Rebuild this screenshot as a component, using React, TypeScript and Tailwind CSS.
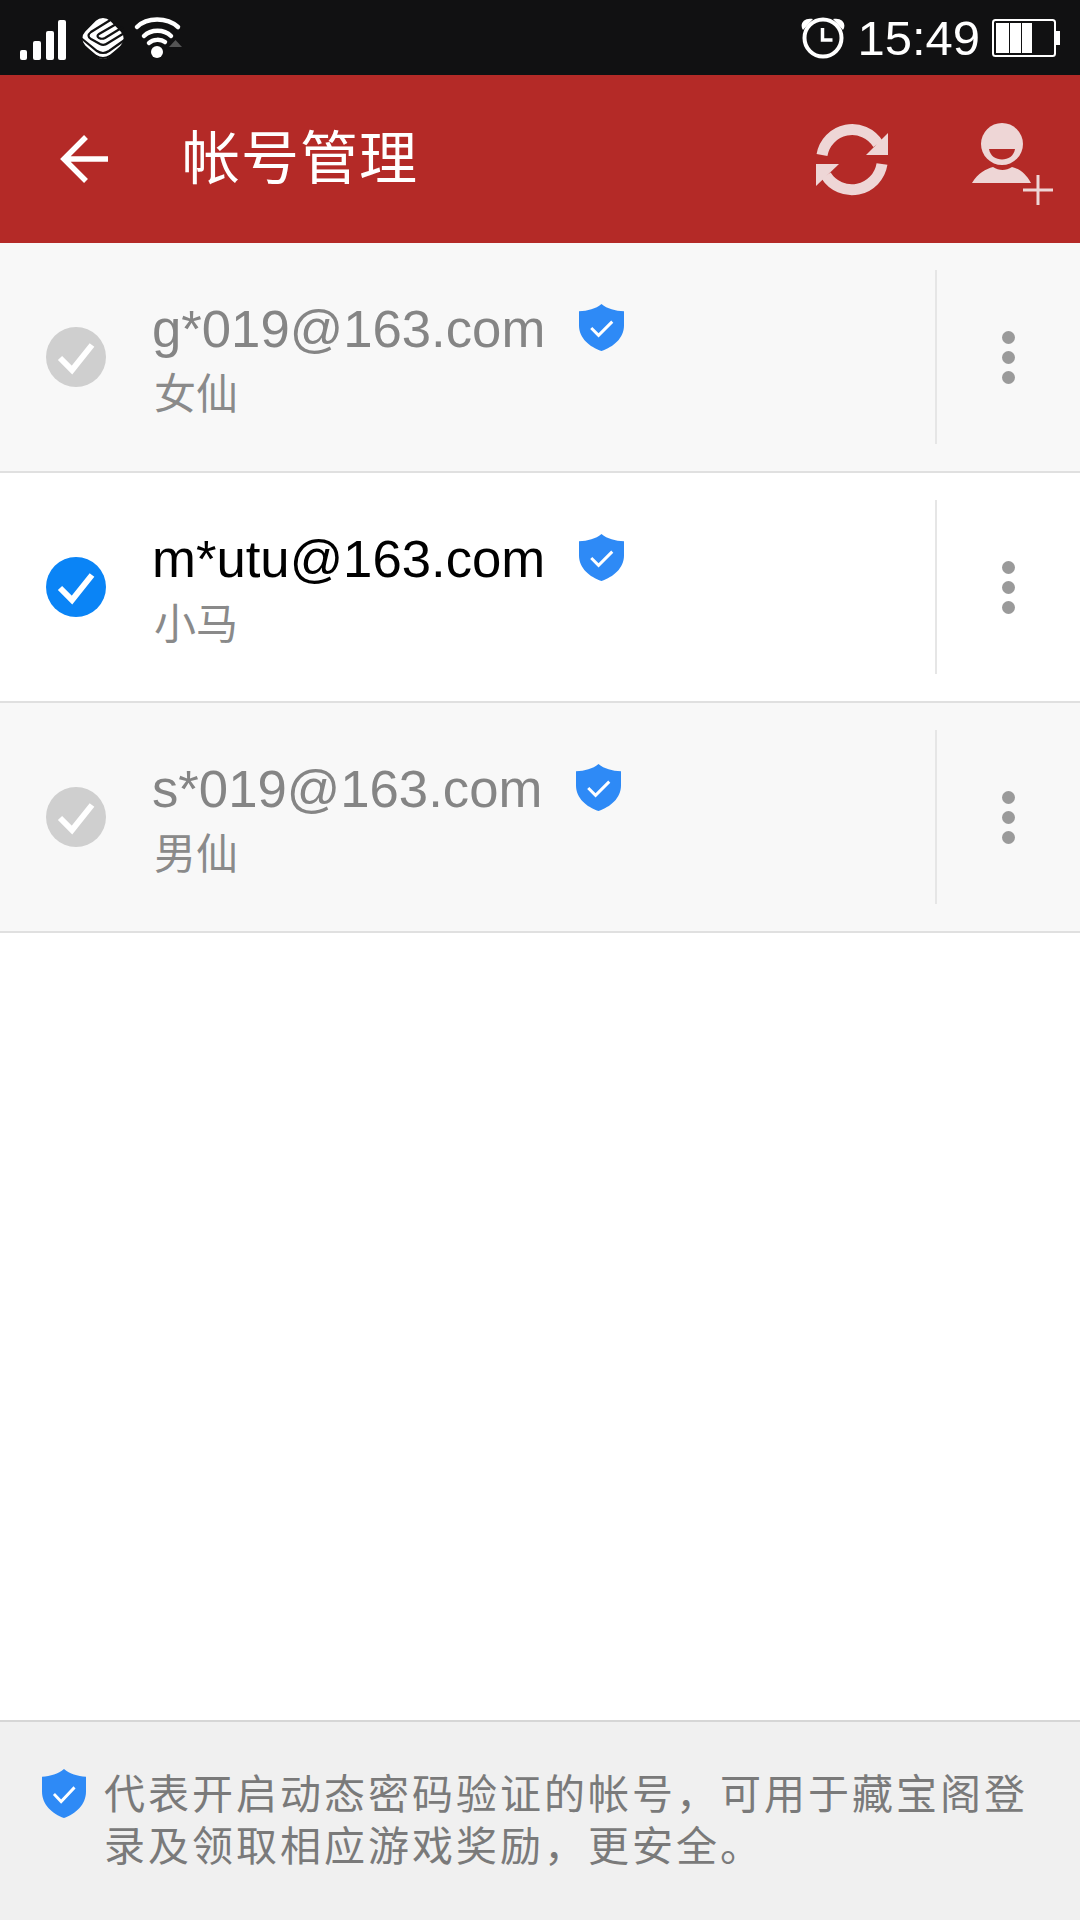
const cjk = "font-['Noto_Sans_CJK_SC','Noto_Sans',sans-serif]";

function Shield({ className }: { className: string }) {
  return (
    <svg viewBox="0 0 46 48" preserveAspectRatio="none" className={className}>
      <path d="M23 0C29 5 37 7 46 7.5V22C46 35 35 44 23 48C11 44 0 35 0 22V7.5C9 7 17 5 23 0Z" fill="#2e8af6" />
      <path d="M12.5 24.5L20 32L34 18" fill="none" stroke="#fff" strokeWidth="3" />
    </svg>
  );
}

function Row({ email, name, active, bg }: { email: string; name: string; active?: boolean; bg: string }) {
  return (
    <div className={`flex h-[230px] items-center border-b-2 border-[#e0e0e0] ${bg}`}>
      <div className="flex w-[152px] shrink-0 justify-start pl-[46px]">
        <svg viewBox="0 0 60 60" className="h-[60px] w-[60px]">
          <circle cx="30" cy="30" r="30" fill={active ? "#0a84f6" : "#cfcfcf"} />
          <path d="M14 31L26 43L46 18" fill="none" stroke="#fff" strokeWidth="6" />
        </svg>
      </div>
      <div className="flex w-[783px] shrink-0 flex-col">
        <div className="flex items-center">
          <span className={`font-['Liberation_Sans',sans-serif] text-[52.7px] leading-[62px] ${active ? "text-black" : "text-[#858585]"}`}>{email}</span>
          <Shield className="mb-[3px] ml-[34px] h-[47px] w-[45px]" />
        </div>
        <span className={`${cjk} mt-[6px] pl-[2px] text-[42px] leading-[50px] text-[#8a8a8a]`}>{name}</span>
      </div>
      <div className="h-[174px] w-[2px] shrink-0 bg-[#e6e6e6]" />
      <div className="flex flex-1 flex-col items-center gap-[7px]">
        <div className="h-[13px] w-[13px] rounded-full bg-[#9a9a9a]" />
        <div className="h-[13px] w-[13px] rounded-full bg-[#9a9a9a]" />
        <div className="h-[13px] w-[13px] rounded-full bg-[#9a9a9a]" />
      </div>
    </div>
  );
}

export default function App() {
  return (
    <div className="flex h-[1920px] w-[1080px] flex-col overflow-hidden bg-white">
      <div className="flex h-[75px] shrink-0 items-center bg-[#111112] text-white">
        <svg viewBox="18 12 170 52" className="ml-[18px] h-[52px] w-[170px]">
          <rect x="20" y="50" width="7" height="10" rx="2" fill="#fff" />
          <rect x="33" y="41" width="8" height="19" rx="2" fill="#fff" />
          <rect x="46" y="31" width="8" height="29" rx="2" fill="#fff" />
          <rect x="58" y="20" width="8" height="40" rx="2" fill="#fff" />
          <rect x="85.500" y="21" width="35" height="35" rx="10" transform="rotate(45 103 38.500)" fill="#fff" />
          <g fill="none" stroke="#111112" strokeWidth="2.200">
            <path d="M112 19L91 32Q86 36 91 39L100 44Q104 46 108 43L126 32" />
            <path d="M118 23L99 34Q96 36 99 38Q102 39.500 105 38L123 27" />
            <path d="M81 38L97 51Q103 55 109 51L126 39" />
            <path d="M85 47L96 56Q103 60 110 56L120 48" />
          </g>
          <path d="M137 27C147 17 167 17 178 27" fill="none" stroke="#fff" strokeWidth="4.500" strokeLinecap="round" />
          <path d="M144 36C151 29 164 29 171 36" fill="none" stroke="#fff" strokeWidth="4.500" strokeLinecap="round" />
          <path d="M149 43C153 39 161 39 165 42" fill="none" stroke="#fff" strokeWidth="4.500" strokeLinecap="round" />
          <circle cx="157" cy="52" r="6" fill="#fff" />
          <path d="M169 47L175.500 40L182 47Z" fill="#555" />
        </svg>
        <div className="flex-1" />
        <svg viewBox="801 16 44 44" className="h-[44px] w-[44px]">
          <circle cx="823" cy="38" r="18.500" fill="none" stroke="#fff" strokeWidth="4" />
          <path d="M822.500 28V40H832.500" fill="none" stroke="#fff" strokeWidth="3.500" />
          <path d="M803 30C799 24 804 17 813 19ZM843 30C847 24 842 17 833 19Z" fill="#fff" />
        </svg>
        <span className="ml-[12px] font-['Liberation_Sans',sans-serif] text-[49px] leading-[50px]">15:49</span>
        <svg viewBox="0 0 68 38" className="ml-[12px] mr-[20px] h-[38px] w-[68px]">
          <rect x="1" y="1" width="62" height="36" rx="2.500" fill="none" stroke="#fff" strokeWidth="2" />
          <rect x="4" y="4" width="13" height="30" fill="#fff" />
          <rect x="18" y="4" width="11" height="30" fill="#fff" />
          <rect x="30" y="4" width="10" height="30" fill="#fff" />
          <rect x="64" y="12" width="4" height="14" fill="#fff" />
        </svg>
      </div>

      <div className="flex h-[168px] shrink-0 items-center bg-[#b42a27]">
        <svg viewBox="0 0 50 50" className="ml-[60px] h-[50px] w-[50px]">
          <path d="M48 25H5M26 3L4 25L26 47" fill="none" stroke="#fff" strokeWidth="5.500" />
        </svg>
        <span className={`${cjk} ml-[72px] mb-[10px] text-[58px] leading-[70px] tracking-[1px] text-white`}>帐号管理</span>
        <div className="flex-1" />
        <svg viewBox="816 122 72 73" className="h-[73px] w-[72px]">
          <path d="M822 154A30.500 30.500 0 0 1 878 143" fill="none" stroke="#eed6d6" strokeWidth="11" />
          <path d="M888 132V154H866Z" fill="#eed6d6" />
          <path d="M882 163A30.500 30.500 0 0 1 826 174.400" fill="none" stroke="#eed6d6" strokeWidth="11" />
          <path d="M816 185V163H839Z" fill="#eed6d6" />
        </svg>
        <svg viewBox="970 120 86 86" className="ml-[82px] mr-[24px] mb-[-10px] h-[86px] w-[86px]">
          <circle cx="1002" cy="143" r="21" fill="#eed6d6" />
          <path d="M989 148H1015C1013 162 991 162 989 148Z" fill="#b42a27" />
          <path d="M972 182C978 172 986 168 993 166C999 170 1006 170 1012 166C1020 168 1026 173 1031 182Z" fill="#eed6d6" />
          <path d="M1023 189H1053M1038 174V204" stroke="#eed6d6" strokeWidth="3" fill="none" />
        </svg>
      </div>

      <Row email="g*019@163.com" name="女仙" bg="bg-[#f8f8f8]" />
      <Row email="m*utu@163.com" name="小马" active bg="bg-white" />
      <Row email="s*019@163.com" name="男仙" bg="bg-[#f8f8f8]" />

      <div className="flex-1" />

      <div className="flex h-[200px] shrink-0 items-start border-t-2 border-[#d6d6d6] bg-[#f0f0f0]">
        <Shield className="ml-[42px] mt-[47px] h-[49px] w-[44px]" />
        <p className={`${cjk} ml-[18px] mt-[43px] w-[940px] text-[41px] leading-[52px] tracking-[3px] text-[#7a7a7a]`}>
          代表开启动态密码验证的帐号，可用于藏宝阁登
          <br />
          录及领取相应游戏奖励，更安全。
        </p>
      </div>
    </div>
  );
}
